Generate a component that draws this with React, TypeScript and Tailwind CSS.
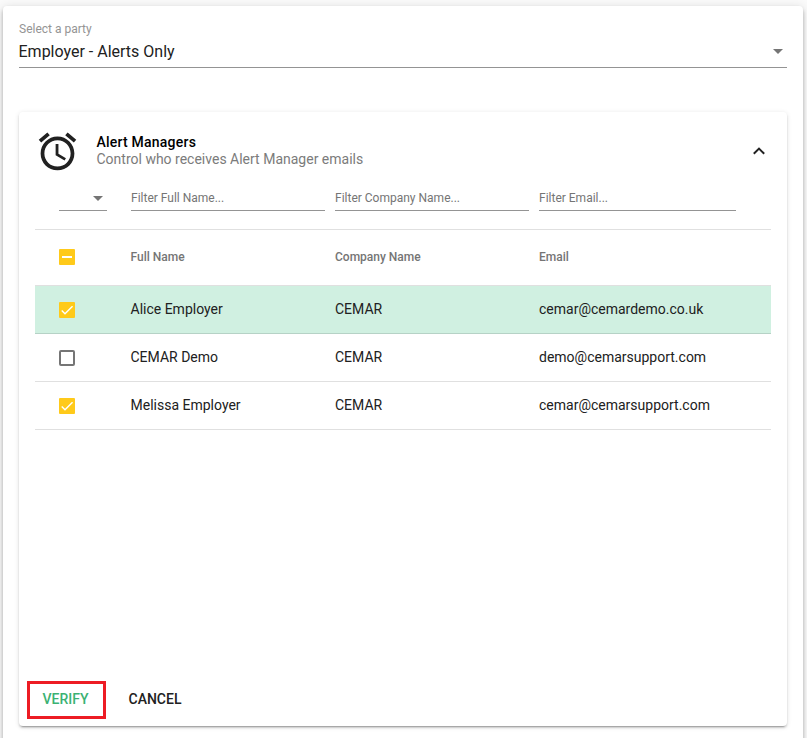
import React, { useState } from 'react';

const initialUsers = [
  { name: 'Alice Employer', company: 'CEMAR', email: 'cemar@cemardemo.co.uk', checked: true, active: true },
  { name: 'CEMAR Demo', company: 'CEMAR', email: 'demo@cemarsupport.com', checked: false, active: false },
  { name: 'Melissa Employer', company: 'CEMAR', email: 'cemar@cemarsupport.com', checked: true, active: false },
];

const Caret = () => (
  <svg width="10" height="5" viewBox="0 0 10 5" className="shrink-0 fill-[#757575]">
    <path d="M0 0h10L5 5z" />
  </svg>
);

const Checkbox = ({ state, onClick }: { state: 'on' | 'off' | 'mixed'; onClick?: () => void }) => {
  if (state === 'off') {
    return <button onClick={onClick} className="block h-4 w-4 rounded-[2px] border-2 border-[#757575]" />;
  }
  return (
    <button onClick={onClick} className="block h-4 w-4 rounded-[1px] bg-[#ffca1a]">
      <svg width="16" height="16" viewBox="0 0 24 24" fill="none" stroke="#fff">
        {state === 'on' ? (
          <path d="M4.1 12.7 9 17.6 20.3 6.3" strokeWidth="2.13" />
        ) : (
          <path d="M4.5 12h15" strokeWidth="3" />
        )}
      </svg>
    </button>
  );
};

const App = () => {
  const [users, setUsers] = useState(initialUsers);

  const toggle = (index: number) => {
    setUsers(users.map((user, i) => (i === index ? { ...user, checked: !user.checked } : user)));
  };

  const count = users.filter((user) => user.checked).length;
  const headState = count === 0 ? 'off' : count === users.length ? 'on' : 'mixed';

  return (
    <div className="h-[738px] overflow-hidden bg-[#fafafa] pt-1.5 pr-1 pl-[3px] font-['Roboto',sans-serif] text-[#212121]">
      <main className="h-[760px] rounded bg-white px-4 pt-4 shadow-[0_2px_4px_-1px_rgba(0,0,0,0.2),0_4px_5px_0_rgba(0,0,0,0.14),0_1px_10px_0_rgba(0,0,0,0.12)]">
        {/* Party select */}
        <div className="h-[46px] border-b border-[#949494]">
          <div className="h-[14px] text-xs leading-[14px] text-[#949494]">Select a party</div>
          <div className="flex h-[31px] items-center justify-between pr-1">
            <span className="-ml-[0.5px] text-base leading-[18px]">Employer - Alerts Only</span>
            <Caret />
          </div>
        </div>

        {/* Alert managers */}
        <section className="mt-11 flex h-[614px] flex-col rounded bg-white px-4 shadow-[0_3px_1px_-2px_rgba(0,0,0,0.2),0_2px_2px_0_rgba(0,0,0,0.14),0_1px_5px_0_rgba(0,0,0,0.12)]">
          <header className="flex h-[69px] pt-[17px]">
            <svg width="45" height="45" viewBox="0 0 24 24" className="shrink-0 fill-[#212121]">
              <path d="M22 5.72l-4.6-3.86-1.29 1.53 4.6 3.86L22 5.72zM7.88 3.39L6.6 1.86 2 5.71l1.29 1.53 4.59-3.85zM12.5 8H11v6l4.75 2.85.75-1.23-4-2.37V8zM12 4c-4.97 0-9 4.03-9 9s4.02 9 9 9c4.97 0 9-4.03 9-9s-4.03-9-9-9zm0 16c-3.87 0-7-3.13-7-7s3.13-7 7-7 7 3.13 7 7-3.13 7-7 7z" />
            </svg>
            <div className="ml-[16.5px] grow pt-[5px] text-sm leading-[17px]">
              <h2 className="font-medium tracking-[0.22px] text-black">Alert Managers</h2>
              <p className="text-[#7b7b7b]">Control who receives Alert Manager emails</p>
            </div>
            <svg width="12" height="8" viewBox="0 0 12 8" className="mt-[18px] mr-1.5 fill-none stroke-[#212121] stroke-2">
              <path d="M.8 6.8 6 1.6l5.2 5.2" />
            </svg>
          </header>

          <div className="flex h-[49px] border-b border-[#e0e0e0] pt-[5px] pl-6 text-xs leading-6 text-[#757575]">
            <div className="mr-6 flex h-[25px] w-12 items-center justify-end border-b border-[#949494] pr-1">
              <Caret />
            </div>
            <div className="mr-2.5 h-[25px] w-[194px] border-b border-[#949494]">Filter Full Name...</div>
            <div className="mr-2.5 h-[25px] w-[194px] border-b border-[#949494]">Filter Company Name...</div>
            <div className="h-[25px] w-[197px] border-b border-[#949494]">Filter Email...</div>
          </div>

          <div className="grid h-14 grid-cols-[71.5px_204.5px_204px_1fr] items-center border-b border-[#e0e0e0] pb-0.5 pl-6 text-xs font-medium text-[#757575]">
            <Checkbox state={headState} />
            <span>Full Name</span>
            <span>Company Name</span>
            <span>Email</span>
          </div>
          {users.map((user, index) => (
            <div
              key={user.name}
              className={`grid h-12 grid-cols-[71.5px_204.5px_204px_1fr] items-center border-b pl-6 text-sm ${
                user.active ? 'border-[#b6d2c6] bg-[#d0f0e1]' : 'border-[#e0e0e0]'
              }`}
            >
              <Checkbox state={user.checked ? 'on' : 'off'} onClick={() => toggle(index)} />
              <span className="pb-0.5">{user.name}</span>
              <span className="pb-0.5">{user.company}</span>
              <span className="pb-0.5">{user.email}</span>
            </div>
          ))}

          <div className="mt-auto mb-[7px] -ml-2 flex h-[38px] items-center text-sm font-medium">
            <button className="h-[38px] w-[79px] border-3 border-[#ed1c24] pr-0.5 pb-0.5 text-[#3bb273]">VERIFY</button>
            <button className="ml-[22.5px] pb-0.5">CANCEL</button>
          </div>
        </section>
      </main>
    </div>
  );
};

export default App;
